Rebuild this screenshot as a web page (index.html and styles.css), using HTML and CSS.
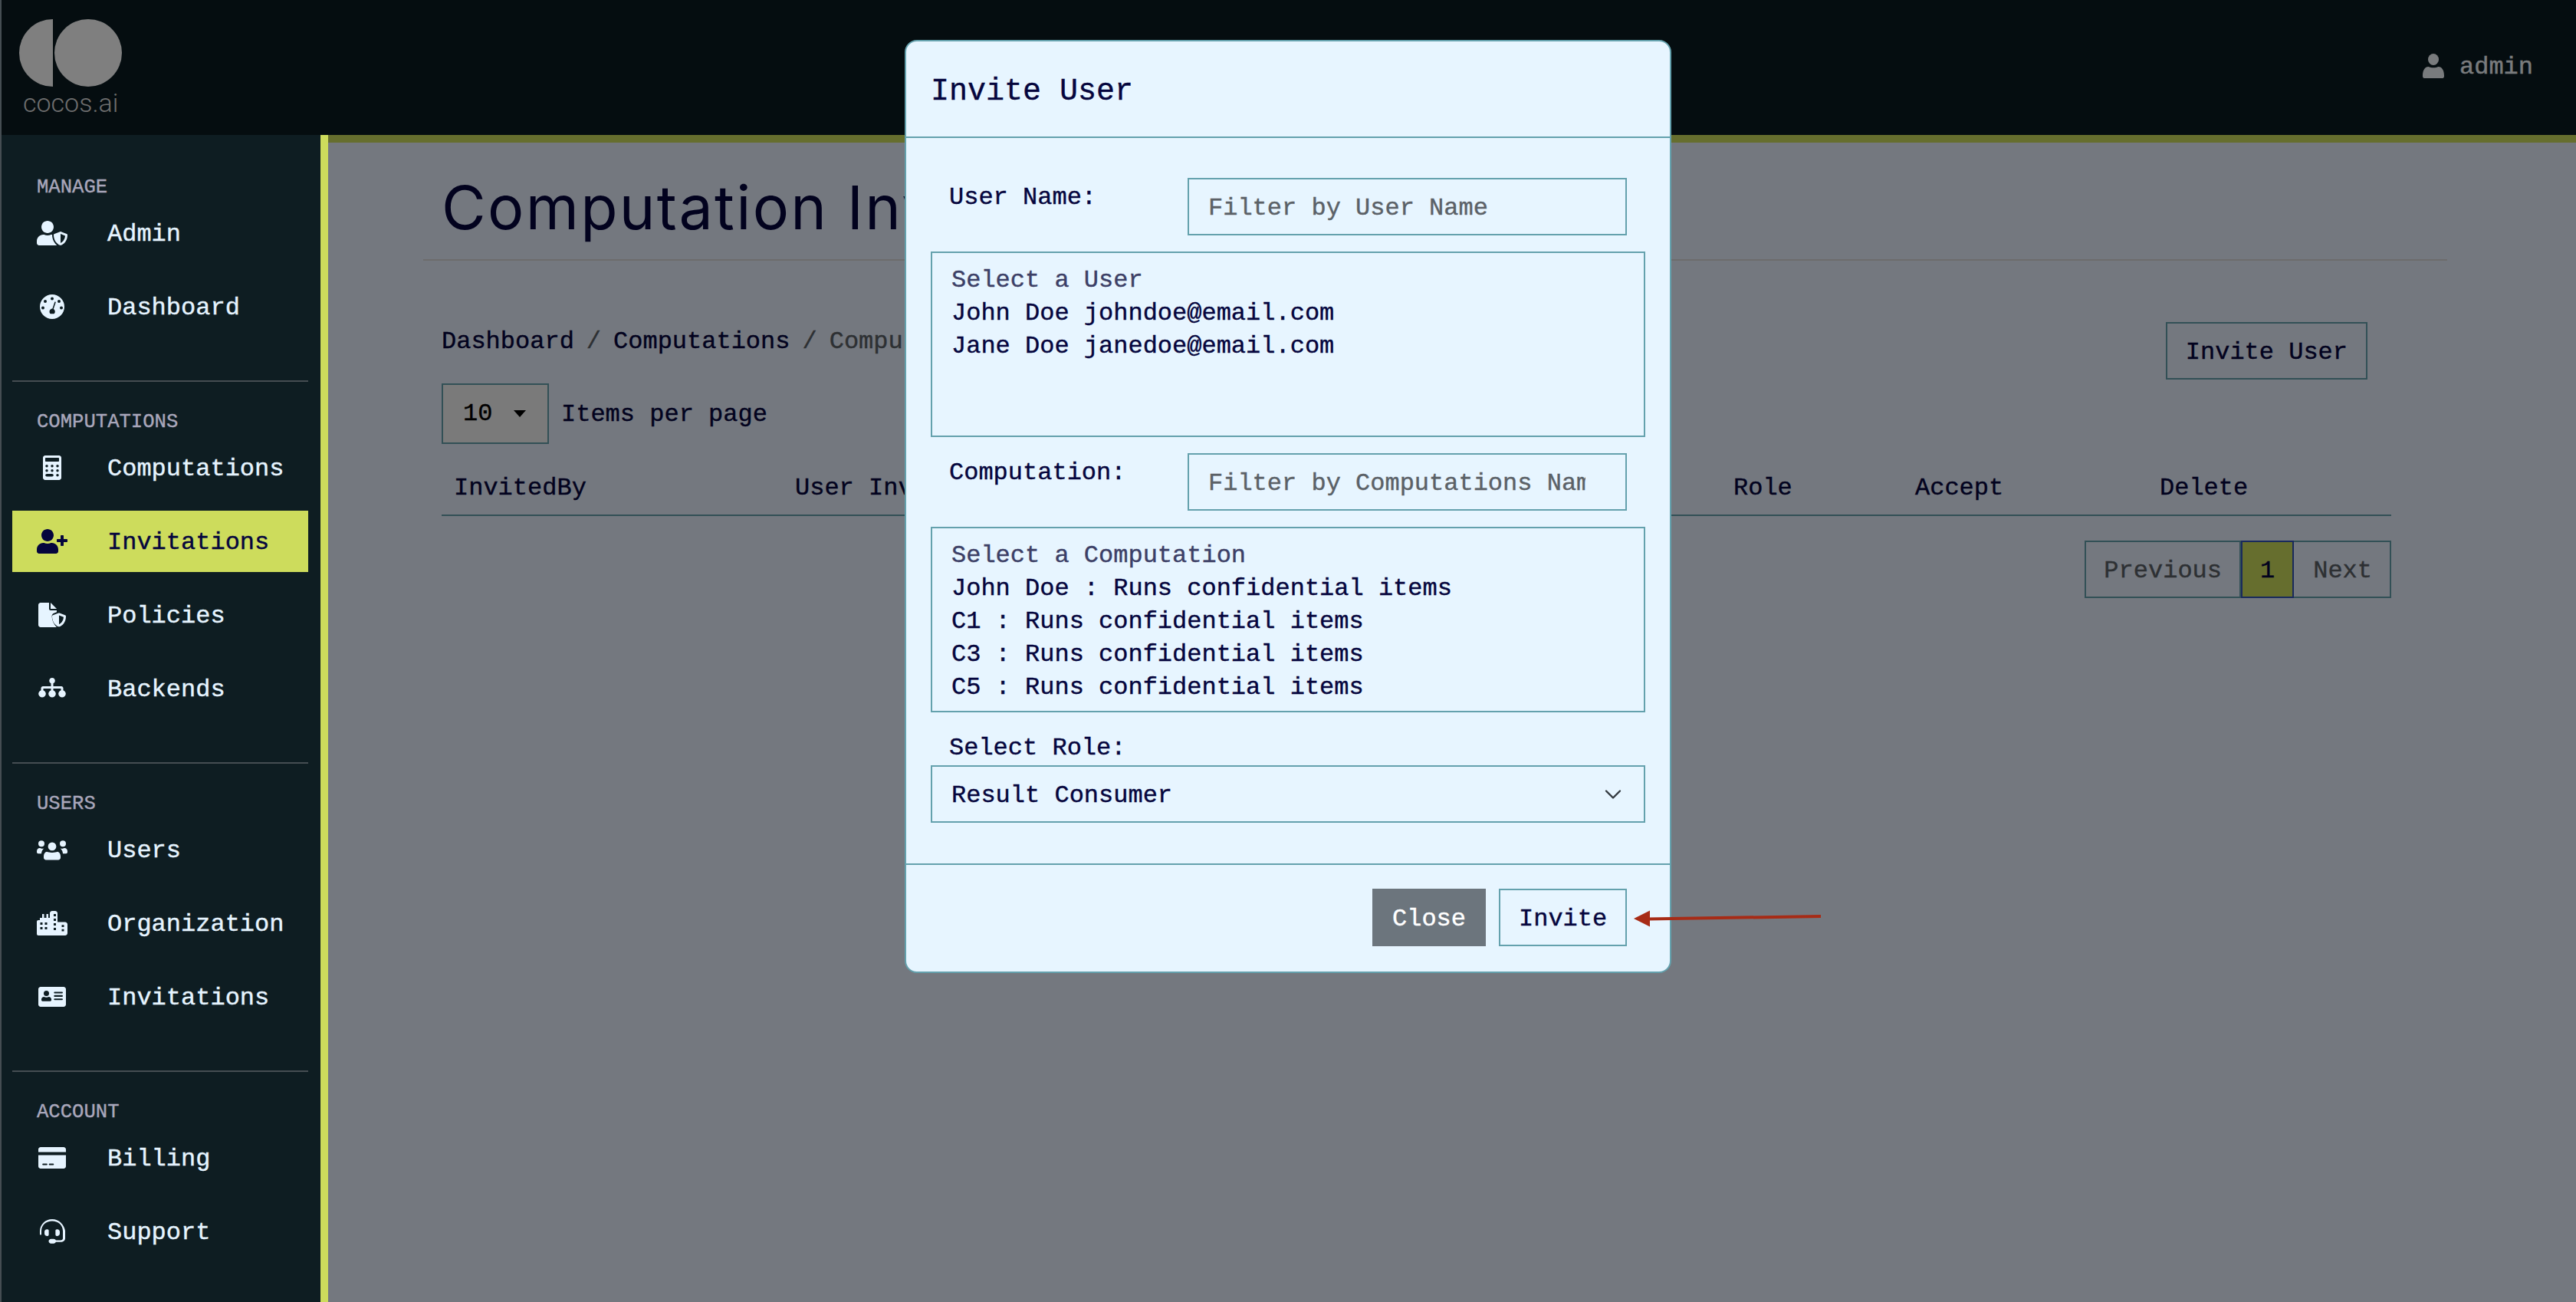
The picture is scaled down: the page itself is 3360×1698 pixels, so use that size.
FILE: index.html
```html
<!DOCTYPE html>
<html lang="en">

<head>
  <meta charset="UTF-8">
  <title>Computation Invitations</title>
  <link rel="stylesheet" href="styles.css">
</head>

<body>
  <header class="topbar">
    <div class="logo">
      <svg class="logo-mark" viewBox="0 0 134 90" width="134" height="90">
        <path d="M44 1a44 44 0 0 0 0 88z" />
        <circle cx="90" cy="45" r="44" />
      </svg>
      <span class="logo-text">cocos.ai</span>
    </div>
    <div class="user">
      <svg viewBox="0 0 448 512" width="28" height="32">
        <ellipse cx="224" cy="120" rx="112" ry="120" />
        <path d="M120 270c60 30 148 30 208 0 70 0 120 70 120 190v10c0 24-20 42-44 42H44c-24 0-44-18-44-42v-10c0-120 50-190 120-190z" />
      </svg>
      <span>admin</span>
    </div>
  </header>

  <div class="layout">
    <nav class="sidebar">
      <div class="group">
        <p class="group-title">MANAGE</p>
        <a class="item">
          <svg class="icon" viewBox="0 0 640 512">
            <path d="M224 256c70.7 0 128-57.3 128-128S294.7 0 224 0 96 57.3 96 128s57.3 128 128 128z" />
            <path d="M313.6 288h-16.7c-22.2 10.2-46.9 16-72.9 16s-50.6-5.800-72.9-16h-16.7C60.2 288 0 348.2 0 422.4V464c0 26.500 21.500 48 48 48h352c6 0 12-1 17-4C372 470 322 395 320 288z" />
            <path d="M622.300 271.100l-115.200-45c-4.100-1.600-12.600-3.700-22.200 0l-115.200 45c-10.700 4.200-17.700 14-17.700 24.900 0 111.600 68.700 188.800 132.900 213.900 9.600 3.700 18 1.600 22.200 0C558.400 489.900 640 420.500 640 296c0-10.900-7-20.700-17.700-24.900zM496 462.400V273.500l95.500 37.300c-5.600 87.100-60.900 135.400-95.500 151.600z" />
          </svg>
          <span>Admin</span>
        </a>
        <a class="item">
          <svg class="icon" viewBox="0 0 640 512">
            <path fill-rule="evenodd" d="M320 0a256 256 0 1 1 0 512 256 256 0 0 1 0-512zM320 56a32 32 0 1 0 0 64 32 32 0 0 0 0-64zM176 112a32 32 0 1 0 0 64 32 32 0 0 0 0-64zM464 112a32 32 0 1 0 0 64 32 32 0 0 0 0-64zM128 248a32 32 0 1 0 0 64 32 32 0 0 0 0-64zM512 248a32 32 0 1 0 0 64 32 32 0 0 0 0-64zM392 150c-8-3-17 1-20 9l-46 138c-34 0-62 28-62 62 0 18 8 33 20 43h76c12-10 20-25 20-43 0-23-13-43-32-54l46-135c3-8-1-17-9-20z" />
          </svg>
          <span>Dashboard</span>
        </a>
      </div>

      <div class="group">
        <p class="group-title">COMPUTATIONS</p>
        <a class="item">
          <svg class="icon" viewBox="0 0 640 512">
            <path fill-rule="evenodd" d="M176 0h288c26 0 48 22 48 48v416c0 26-22 48-48 48H176c-26 0-48-22-48-48V48c0-26 22-48 48-48zM192 48c-9 0-16 7-16 16v48c0 9 7 16 16 16h256c9 0 16-7 16-16V64c0-9-7-16-16-16zM208 192a28 28 0 1 0 0 56 28 28 0 0 0 0-56zM320 192a28 28 0 1 0 0 56 28 28 0 0 0 0-56zM432 192a28 28 0 1 0 0 56 28 28 0 0 0 0-56zM208 288a28 28 0 1 0 0 56 28 28 0 0 0 0-56zM320 288a28 28 0 1 0 0 56 28 28 0 0 0 0-56zM432 288a28 28 0 1 0 0 56 28 28 0 0 0 0-56zM208 384c-16 0-28 12-28 28s12 28 28 28h112c16 0 28-12 28-28s-12-28-28-28zM432 384a28 28 0 1 0 0 56 28 28 0 0 0 0-56z" />
          </svg>
          <span>Computations</span>
        </a>
        <a class="item active">
          <svg class="icon" viewBox="0 0 640 512">
            <path d="M624 208h-64v-64c0-8.800-7.200-16-16-16h-32c-8.800 0-16 7.200-16 16v64h-64c-8.800 0-16 7.200-16 16v32c0 8.800 7.200 16 16 16h64v64c0 8.800 7.200 16 16 16h32c8.800 0 16-7.200 16-16v-64h64c8.800 0 16-7.200 16-16v-32c0-8.800-7.200-16-16-16zm-400 48c70.700 0 128-57.300 128-128S294.700 0 224 0 96 57.300 96 128s57.300 128 128 128zm89.600 32h-16.700c-22.200 10.200-46.900 16-72.900 16s-50.600-5.800-72.900-16h-16.700C60.200 288 0 348.200 0 422.400V464c0 26.500 21.500 48 48 48h352c26.500 0 48-21.500 48-48v-41.600c0-74.200-60.200-134.400-134.400-134.400z" />
          </svg>
          <span>Invitations</span>
        </a>
        <a class="item">
          <svg class="icon" viewBox="0 0 640 512">
            <path d="M32 48C32 22 54 0 80 0h176v128c0 18 14 32 32 32h128v34l-60 24c-24 10-42 34-42 62 0 90 38 168 100 232H80c-26 0-48-22-48-48z" />
            <path d="M288 0l128 128H288z" />
            <path d="M590.300 261.100l-115.200-45c-4.100-1.600-12.600-3.700-22.200 0l-115.200 45c-10.700 4.200-17.700 14-17.700 24.900 0 111.600 68.700 188.800 132.900 213.900 9.600 3.700 18 1.600 22.200 0C526.400 479.900 608 410.500 608 286c0-10.900-7-20.700-17.700-24.900zM464 452.400V263.500l95.500 37.300c-5.600 87.100-60.900 135.400-95.500 151.600z" />
          </svg>
          <span>Policies</span>
        </a>
        <a class="item">
          <svg class="icon" viewBox="0 0 640 512">
            <path d="M320 32a60 60 0 0 1 24 115v61h168c22 0 40 18 40 40v44a76 76 0 1 1-48 0v-36H344v36a76 76 0 1 1-48 0v-36H136v36a76 76 0 1 1-48 0v-44c0-22 18-40 40-40h168v-61A60 60 0 0 1 320 32z" />
          </svg>
          <span>Backends</span>
        </a>
      </div>

      <div class="group">
        <p class="group-title">USERS</p>
        <a class="item">
          <svg class="icon" viewBox="0 0 640 512">
            <circle cx="96" cy="130" r="64" />
            <circle cx="544" cy="130" r="64" />
            <circle cx="320" cy="190" r="86" />
            <path d="M0 290c0-44 36-80 80-64 22 10 44 12 70 6-30 22-50 60-54 106H32c-18 0-32-14-32-32zM640 290c0-44-36-80-80-64-22 10-44 12-70 6 30 22 50 60 54 106h64c18 0 32-14 32-32z" />
            <path d="M208 300c30 10 60 18 112 18s82-8 112-18c44 10 64 50 64 96v26c0 26-22 48-48 48H192c-26 0-48-22-48-48v-26c0-46 20-86 64-96z" />
          </svg>
          <span>Users</span>
        </a>
        <a class="item">
          <svg class="icon" viewBox="0 0 640 512">
            <path fill-rule="evenodd" d="M0 224c0-18 14-32 32-32h32v-48h48V64h40v80h48V64h40v80h32V48c0-26 22-48 48-48h64c26 0 48 22 48 48v184h160c26 0 48 22 48 48v184c0 26-22 48-48 48H32c-18 0-32-14-32-32zM72 240v48h48v-48zM168 240v48h48v-48zM72 336v48h48v-48zM168 336v48h48v-48zM352 64v48h48V64zM352 160v48h48v-48zM352 256v48h48v-48zM352 352v48h48v-48zM520 290v44h48v-44zM520 380v44h48v-44z" />
          </svg>
          <span>Organization</span>
        </a>
        <a class="item">
          <svg class="icon" viewBox="0 0 640 512">
            <path fill-rule="evenodd" d="M80 48h480c26 0 48 22 48 48v320c0 26-22 48-48 48H80c-26 0-48-22-48-48V96c0-26 22-48 48-48zM200 128a56 56 0 1 0 0 112 56 56 0 0 0 0-112zM150 256c-30 0-54 24-54 54v14c0 12 10 22 22 22h164c12 0 22-10 22-22v-14c0-30-24-54-54-54-14 6-30 10-50 10s-36-4-50-10zM370 150c-6 0-12 6-12 12v10c0 6 6 12 12 12h160c6 0 12-6 12-12v-10c0-6-6-12-12-12zM370 220c-6 0-12 6-12 12v10c0 6 6 12 12 12h160c6 0 12-6 12-12v-10c0-6-6-12-12-12zM370 290c-6 0-12 6-12 12v10c0 6 6 12 12 12h160c6 0 12-6 12-12v-10c0-6-6-12-12-12z" />
          </svg>
          <span>Invitations</span>
        </a>
      </div>

      <div class="group last">
        <p class="group-title">ACCOUNT</p>
        <a class="item">
          <svg class="icon" viewBox="0 0 640 512">
            <path fill-rule="evenodd" d="M80 32h480c26 0 48 22 48 48v56H32V80c0-26 22-48 48-48zM32 200h576v232c0 26-22 48-48 48H80c-26 0-48-22-48-48zM128 376c-6 0-12 6-12 12v8c0 6 6 12 12 12h80c6 0 12-6 12-12v-8c0-6-6-12-12-12zM264 376c-6 0-12 6-12 12v8c0 6 6 12 12 12h80c6 0 12-6 12-12v-8c0-6-6-12-12-12z" />
          </svg>
          <span>Billing</span>
        </a>
        <a class="item">
          <svg class="icon" viewBox="0 0 640 512">
            <path d="M210 210h14c14 0 26 12 26 26v88c0 14-12 26-26 26h-14c-30 0-50-24-50-54v-32c0-30 20-54 50-54zM430 210h-14c-14 0-26 12-26 26v88c0 14 12 26 26 26h14c30 0 50-24 50-54v-32c0-30-20-54-50-54z" />
            <path d="M320 0C175 0 72 108 64 240c-1 15 0 54 0 72 0 20 32 20 32 0v-64C96 124 195 40 320 40s224 84 224 208v152c0 26-20 40-48 40H398c-8-18-24-30-46-30h-56c-26 0-48 22-48 48s22 48 48 48h56c22 0 38-12 46-30h98c56 0 96-32 96-76V240C568 108 465 0 320 0z" />
          </svg>
          <span>Support</span>
        </a>
      </div>
    </nav>

    <main class="main">
      <h1 class="page-title">Computation Invitations</h1>
      <div class="content">
        <div class="toolbar">
          <div class="breadcrumb">
            <span>Dashboard</span><i>/</i><span>Computations</span><i>/</i><span class="current">Computation Invitations</span>
          </div>
          <button class="btn btn-outline">Invite User</button>
        </div>
        <div class="per-page">
          <div class="per-page-box"><span>10</span><b class="caret"></b></div>
          <span>Items per page</span>
        </div>
        <div class="thead">
          <span>InvitedBy</span>
          <span>User Invited</span>
          <span>Role</span>
          <span>Accept</span>
          <span>Delete</span>
        </div>
        <div class="pagination">
          <a>Previous</a>
          <a class="on">1</a>
          <a class="next">Next</a>
        </div>
      </div>
    </main>
  </div>

  <div class="backdrop"></div>

  <div class="modal">
    <div class="modal-header">Invite User</div>
    <div class="modal-body">
      <div class="filter-row">
        <label>User Name:</label>
        <input type="text" placeholder="Filter by User Name">
      </div>
      <select class="listbox" size="5">
        <option class="hint">Select a User</option>
        <option>John Doe johndoe@email.com</option>
        <option>Jane Doe janedoe@email.com</option>
      </select>
      <div class="filter-row">
        <label>Computation:</label>
        <input type="text" placeholder="Filter by Computations Name">
      </div>
      <select class="listbox" size="5">
        <option class="hint">Select a Computation</option>
        <option>John Doe : Runs confidential items</option>
        <option>C1 : Runs confidential items</option>
        <option>C3 : Runs confidential items</option>
        <option>C5 : Runs confidential items</option>
      </select>
      <label class="role-label">Select Role:</label>
      <select class="role">
        <option>Result Consumer</option>
      </select>
    </div>
    <div class="modal-footer">
      <button class="btn btn-close">Close</button>
      <button class="btn btn-invite">Invite</button>
    </div>
  </div>

  <svg class="arrow" viewBox="0 0 254 30" width="254" height="30">
    <path d="M20 14.500L245 11v4L20 18.500z" />
    <path d="M1 16L22 5.500v21z" />
  </svg>
</body>

</html>
```

FILE: styles.css
```css
* {
  box-sizing: border-box;
}

html {
  height: 1698px;
  overflow: hidden;
}

body {
  margin: 0;
  width: 3360px;
  height: 1698px;
  overflow: hidden;
  position: relative;
  background: #e8f0fe;
  color: #05053d;
  font-family: "Liberation Mono", "DejaVu Sans Mono", monospace;
  font-size: 32px;
  line-height: 48px;
  -webkit-text-stroke: 0.4px currentColor;
  border-left: 2px solid #454d52;
}

/* top bar */
.topbar {
  height: 176px;
  background: #0a1a20;
  display: flex;
  justify-content: space-between;
  color: #f3f6fa;
}

.logo {
  position: relative;
  width: 200px;
  padding: 24px 0 0 23px;
}

.logo-mark {
  display: block;
  fill: #fff;
}

.logo-text {
  display: block;
  margin: 0 0 0 5px;
  font-family: Roboto, sans-serif;
  font-weight: 300;
  font-size: 34px;
  line-height: 40px;
  color: #dcdcdc;
  -webkit-text-stroke: 0;
}

.user {
  display: flex;
  align-items: center;
  gap: 20px;
  height: 48px;
  margin: 62px 56px 0 0;
}

.user span {
  padding-top: 3px;
}

.user svg {
  fill: currentColor;
}

/* sidebar */
.layout {
  display: flex;
  height: 1522px;
}

.sidebar {
  position: relative;
  z-index: 2;
  flex: none;
  width: 426px;
  padding: 48px 16px 0 14px;
  background: #0e1d22;
  border-right: 10px solid #cddc5c;
  color: #e6f4ff;
}

.group {
  padding-bottom: 40px;
  margin-bottom: 32px;
  border-bottom: 2px solid #454d52;
}

.group.last {
  border-bottom: 0;
}

.group-title {
  margin: 0 0 2px;
  padding: 4px 0 0 32px;
  font-size: 25.6px;
  line-height: 34px;
  color: #a9a7bb;
}

.item {
  display: flex;
  align-items: center;
  gap: 52px;
  height: 80px;
  margin-bottom: 16px;
  padding-left: 32px;
}

.item span {
  padding-top: 3px;
}

.item.active {
  background: #cddc5c;
  color: #05053d;
}

.icon {
  flex: none;
  width: 40px;
  height: 32px;
  fill: currentColor;
}

/* page */
.main {
  flex: 1;
  padding: 36px 168px 0 124px;
  border-top: 10px solid #cddc5c;
}

.page-title {
  margin: 0;
  padding: 0 0 20px 24px;
  font-family: Inter, sans-serif;
  font-size: 79px;
  font-weight: 400;
  line-height: 96px;
  letter-spacing: 2.3px;
  white-space: nowrap;
  border-bottom: 2px solid #d8d8d8;
  -webkit-text-stroke: 0;
}

.content {
  margin: 80px 73px 0 24px;
}

.toolbar {
  display: flex;
  justify-content: space-between;
  align-items: flex-start;
}

.breadcrumb {
  padding-top: 2px;
}

.breadcrumb i {
  font-style: normal;
  margin: 0 16px;
  color: #5b6167;
}

.breadcrumb .current {
  color: #5b6167;
}

.btn {
  font: inherit;
  height: 75px;
  padding: 4px 24px 0;
  border: 2px solid #64a1ad;
  background: transparent;
  color: #05053d;
}

.btn-outline {
  margin-right: 31px;
}

.per-page {
  display: flex;
  align-items: center;
  gap: 16px;
  margin-top: 5px;
}

.per-page > span {
  padding-top: 2px;
}

.per-page-box {
  display: flex;
  align-items: center;
  width: 140px;
  height: 79px;
  padding: 0 0 0 26px;
  background: #f5f5f5;
  border: 2px solid #64a1ad;
  color: #000;
}

.caret {
  margin-left: 28px;
  border-top: 9px solid #000;
  border-left: 8px solid transparent;
  border-right: 8px solid transparent;
}

.thead {
  display: grid;
  grid-template-columns: 445px 1224px 237px 319px 1fr;
  margin-top: 16px;
  padding: 18px 0 10px;
  border-bottom: 2px solid #64a1ad;
}

.thead span {
  padding-left: 16px;
}

.pagination {
  display: flex;
  justify-content: flex-end;
  margin-top: 32px;
}

.pagination a {
  height: 75px;
  padding: 14px 23px 0;
  border: 2px solid #64a1ad;
  color: #5b6167;
}

.pagination a + a {
  border-left: 0;
}

.pagination .next {
  padding-left: 25px;
}

.pagination .on {
  background: #cddc5c;
  color: #05053d;
  border: 2px solid #3354b8;
}

/* modal */
.backdrop {
  position: absolute;
  inset: 0;
  z-index: 1;
  background: rgba(0, 0, 0, 0.5);
}

.modal {
  position: absolute;
  z-index: 3;
  top: 52px;
  left: 1178px;
  width: 1000px;
  height: 1217px;
  background: #e7f5ff;
  border: 2px solid #64a1ad;
  border-radius: 16px;
}

.modal-header {
  padding: 36px 32px 28px;
  font-size: 40px;
  line-height: 60px;
  border-bottom: 2px solid #64a1ad;
}

.modal-body {
  padding: 52px 32px 53px;
  border-bottom: 2px solid #64a1ad;
}

.filter-row {
  display: flex;
  align-items: flex-start;
  padding: 0 24px;
}

.filter-row label {
  flex: none;
  width: 311px;
  padding-top: 2px;
}

.filter-row input {
  flex: 1;
  min-width: 0;
  height: 75px;
  padding: 4px 52px 0 25px;
  font: inherit;
  color: #05053d;
  background: #e7f5ff;
  border: 2px solid #64a1ad;
  border-radius: 0;
  outline: 0;
}

.filter-row input::placeholder {
  color: #5b6167;
  opacity: 1;
}

.listbox {
  display: block;
  width: 100%;
  height: 242px;
  margin: 21px 0;
  padding: 17px 25px 0;
  font: inherit;
  color: #05053d;
  background: #e7f5ff;
  border: 2px solid #64a1ad;
  border-radius: 0;
  overflow: hidden;
  outline: 0;
}

.listbox option {
  min-height: 43px;
  height: 43px;
  padding: 0;
  line-height: 43px;
}

.listbox .hint {
  color: #3c3f66;
}

.role-label {
  display: block;
  height: 48px;
  padding: 2px 0 0 24px;
}

.role {
  display: block;
  width: 100%;
  height: 75px;
  padding: 4px 25px 0;
  font: inherit;
  color: #05053d;
  border: 2px solid #64a1ad;
  border-radius: 0;
  outline: 0;
  appearance: none;
  background: #e7f5ff url("data:image/svg+xml,%3csvg xmlns='http://www.w3.org/2000/svg' viewBox='0 0 16 16'%3e%3cpath fill='none' stroke='%23343a40' stroke-linecap='round' stroke-linejoin='round' stroke-width='1.600' d='M2 5l6 6 6-6'/%3e%3c/svg%3e") no-repeat right 24px center / 32px 24px;
}

.modal-footer {
  display: flex;
  justify-content: flex-end;
  gap: 17px;
  padding: 31px 56px 0 0;
}

.btn-close {
  width: 148px;
  background: #6c757d;
  border-color: #6c757d;
  color: #fff;
}

.btn-invite {
  width: 167px;
}

.arrow {
  position: absolute;
  z-index: 4;
  left: 2128px;
  top: 1182px;
  fill: #a72b16;
}
```
